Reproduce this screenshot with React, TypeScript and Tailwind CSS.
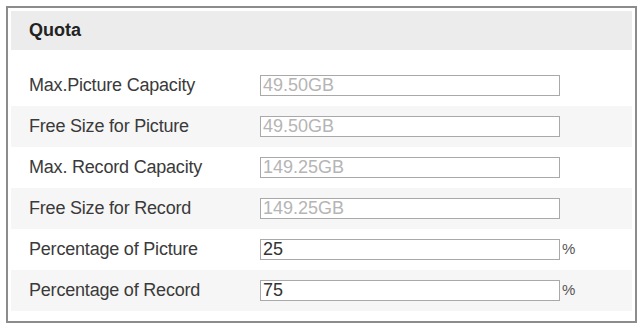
import React from 'react';

type Row = { label: string; value: string; editable: boolean; unit?: string };

const rows: Row[] = [
  { label: 'Max.Picture Capacity', value: '49.50GB', editable: false },
  { label: 'Free Size for Picture', value: '49.50GB', editable: false },
  { label: 'Max. Record Capacity', value: '149.25GB', editable: false },
  { label: 'Free Size for Record', value: '149.25GB', editable: false },
  { label: 'Percentage of Picture', value: '25', editable: true, unit: '%' },
  { label: 'Percentage of Record', value: '75', editable: true, unit: '%' },
];

const App: React.FC = () => {
  return (
    <div className="w-[642px] h-[325px] bg-white pt-[6px] pl-[6px] font-['Liberation_Sans',Arial,sans-serif]">
      <div className="w-[631px] h-[317px] border-2 border-[#8c8c8c] p-[3px] flex flex-col">
        {/* Titre */}
        <div className="h-[39px] bg-[#ececec] flex items-center pl-[18px] text-[18px] font-bold text-[#222]">
          Quota
        </div>

        <div className="pt-[15px] flex flex-col">
          {rows.map((row, i) => (
            <div
              key={row.label}
              className={`h-[41px] flex items-center pl-[18px] ${i % 2 === 1 ? 'bg-[#f6f6f6]' : 'bg-white'}`}
            >
              <span className="w-[231px] text-[18px] text-[#3a3a3a] tracking-[-0.2px]">{row.label}</span>
              <div
                className={`w-[300px] h-[21px] border border-[#a9a9a9] bg-white flex items-center pl-[2px] text-[18px] ${
                  row.editable ? 'text-[#333]' : 'text-[#b5b5b5]'
                }`}
              >
                {row.value}
              </div>
              {row.unit && <span className="ml-[2px] text-[15px] text-[#555]">{row.unit}</span>}
            </div>
          ))}
        </div>
      </div>
    </div>
  );
};

export default App;
